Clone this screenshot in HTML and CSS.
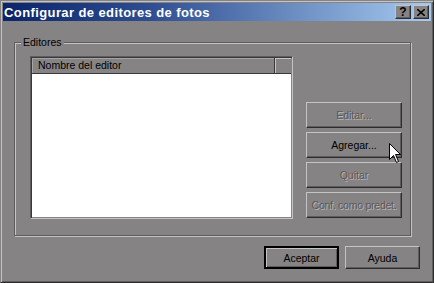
FILE: index.html
```html
<!DOCTYPE html>
<html lang="es">
<head>
    <meta charset="UTF-8">
    <title>Configurar de editores de fotos</title>
    <link rel="stylesheet" href="styles.css">
</head>
<body>
    <div class="window">
        <div class="titlebar">
            <span class="title">Configurar de editores de fotos</span>
            <div class="caption-buttons">
                <button class="cap-btn">?</button>
                <button class="cap-btn">
                    <svg width="8" height="7" viewBox="0 0 8 7">
                        <path d="M0 0 L8 7 M8 0 L0 7" stroke="#000" stroke-width="1.6" fill="none"/>
                    </svg>
                </button>
            </div>
        </div>

        <div class="client">
            <div class="group">
                <span class="group-label">Editores</span>
                <div class="listview">
                    <div class="lv-header">
                        <div class="lv-col">Nombre del editor</div>
                        <div class="lv-col lv-filler"></div>
                    </div>
                    <div class="lv-body"></div>
                </div>
                <div class="side-buttons">
                    <button class="btn" disabled>Editar...</button>
                    <button class="btn">Agregar...</button>
                    <button class="btn" disabled>Quitar</button>
                    <button class="btn btn-tight" disabled>Conf. como predet.</button>
                </div>
            </div>

            <div class="dialog-buttons">
                <button class="btn btn-wide btn-default">Aceptar</button>
                <button class="btn btn-wide">Ayuda</button>
            </div>
        </div>

        <svg class="cursor" width="13" height="21" viewBox="0 0 13 21">
            <path d="M0.5 0.5 V16.5 L4.5 12.5 L7.5 19.5 L9.5 18.5 L6.5 11.5 H11.5 Z" fill="#fff" stroke="#000" stroke-width="1"/>
        </svg>
    </div>
</body>
</html>
```

FILE: styles.css
```css
* {
    margin: 0;
    padding: 0;
    box-sizing: border-box;
}

body {
    background: #868384;
    font-family: "Liberation Sans", Arial, sans-serif;
    font-size: 10.5px;
    color: #000;
}

.window {
    position: relative;
    width: 434px;
    height: 283px;
    background: #868384;
    border: 1px solid;
    border-color: #868384 #2e2d2d #2e2d2d #868384;
    box-shadow: inset 1px 1px #c6c3c4, inset -1px -1px #5e5c5d;
    padding: 2px;
}

.titlebar {
    height: 18px;
    display: flex;
    align-items: center;
    justify-content: space-between;
    background: linear-gradient(to right, #0a246a 0%, #2f4f92 35%, #a6caf0 100%);
    padding: 0 2px 0 1px;
}

.title {
    color: #fff;
    font-weight: bold;
    font-size: 13px;
    letter-spacing: 0.4px;
    white-space: nowrap;
}

.caption-buttons {
    display: flex;
    gap: 2px;
}

.cap-btn {
    width: 16px;
    height: 14px;
    display: flex;
    align-items: center;
    justify-content: center;
    background: #868384;
    border: 1px solid;
    border-color: #c6c3c4 #2e2d2d #2e2d2d #c6c3c4;
    box-shadow: inset -1px -1px #5e5c5d;
    font-family: "Liberation Sans", Arial, sans-serif;
    font-weight: bold;
    font-size: 12px;
    line-height: 12px;
    color: #000;
}

.client {
    padding-top: 21px;
}

.group {
    position: relative;
    width: 397px;
    margin-left: 11px;
    display: flex;
    gap: 13px;
    padding: 13px 8px 16px 15px;
    border: 1px solid #5e5c5d;
    box-shadow: inset 1px 1px #c6c3c4, 1px 1px #c6c3c4;
}

.group-label {
    position: absolute;
    top: -7px;
    left: 6px;
    padding: 0 2px;
    background: #868384;
    line-height: 12px;
}

.listview {
    width: 263px;
    height: 163px;
    display: flex;
    flex-direction: column;
    background: #fff;
    border: 1px solid;
    border-color: #5e5c5d #c6c3c4 #c6c3c4 #5e5c5d;
    box-shadow: inset 1px 1px #3a3839, inset -1px -1px #868384;
    padding: 1px;
}

.lv-header {
    display: flex;
    height: 16px;
    background: #868384;
    border-bottom: 1px solid #3a3839;
}

.lv-col {
    width: 243px;
    padding-left: 6px;
    line-height: 15px;
    border-right: 1px solid #3a3839;
    box-shadow: inset 1px 1px #a7a4a5;
    white-space: nowrap;
}

.lv-filler {
    flex: 1;
    border-right: none;
    box-shadow: inset 1px 1px #c6c3c4;
}

.lv-body {
    flex: 1;
    background: #fff;
}

.side-buttons {
    width: 96px;
    padding-top: 46px;
    display: flex;
    flex-direction: column;
    gap: 4px;
}

.btn {
    height: 26px;
    background: #868384;
    border: 1px solid;
    border-color: #c6c3c4 #2e2d2d #2e2d2d #c6c3c4;
    box-shadow: inset -1px -1px #5e5c5d;
    font-family: "Liberation Sans", Arial, sans-serif;
    font-size: 10.5px;
    color: #000;
    white-space: nowrap;
    padding: 0;
}

.btn:disabled {
    color: #5a5859;
    text-shadow: 1px 1px #b9b6b7;
}

.btn-tight {
    letter-spacing: -0.25px;
}

.dialog-buttons {
    display: flex;
    justify-content: flex-end;
    gap: 6px;
    margin-top: 10px;
    padding-right: 11px;
}

.btn-wide {
    width: 75px;
    height: 23px;
}

.btn-default {
    border: 2px solid #000;
    box-shadow: inset 1px 1px #c6c3c4, inset -1px -1px #5e5c5d;
}

.cursor {
    position: absolute;
    left: 388px;
    top: 142px;
}
```
